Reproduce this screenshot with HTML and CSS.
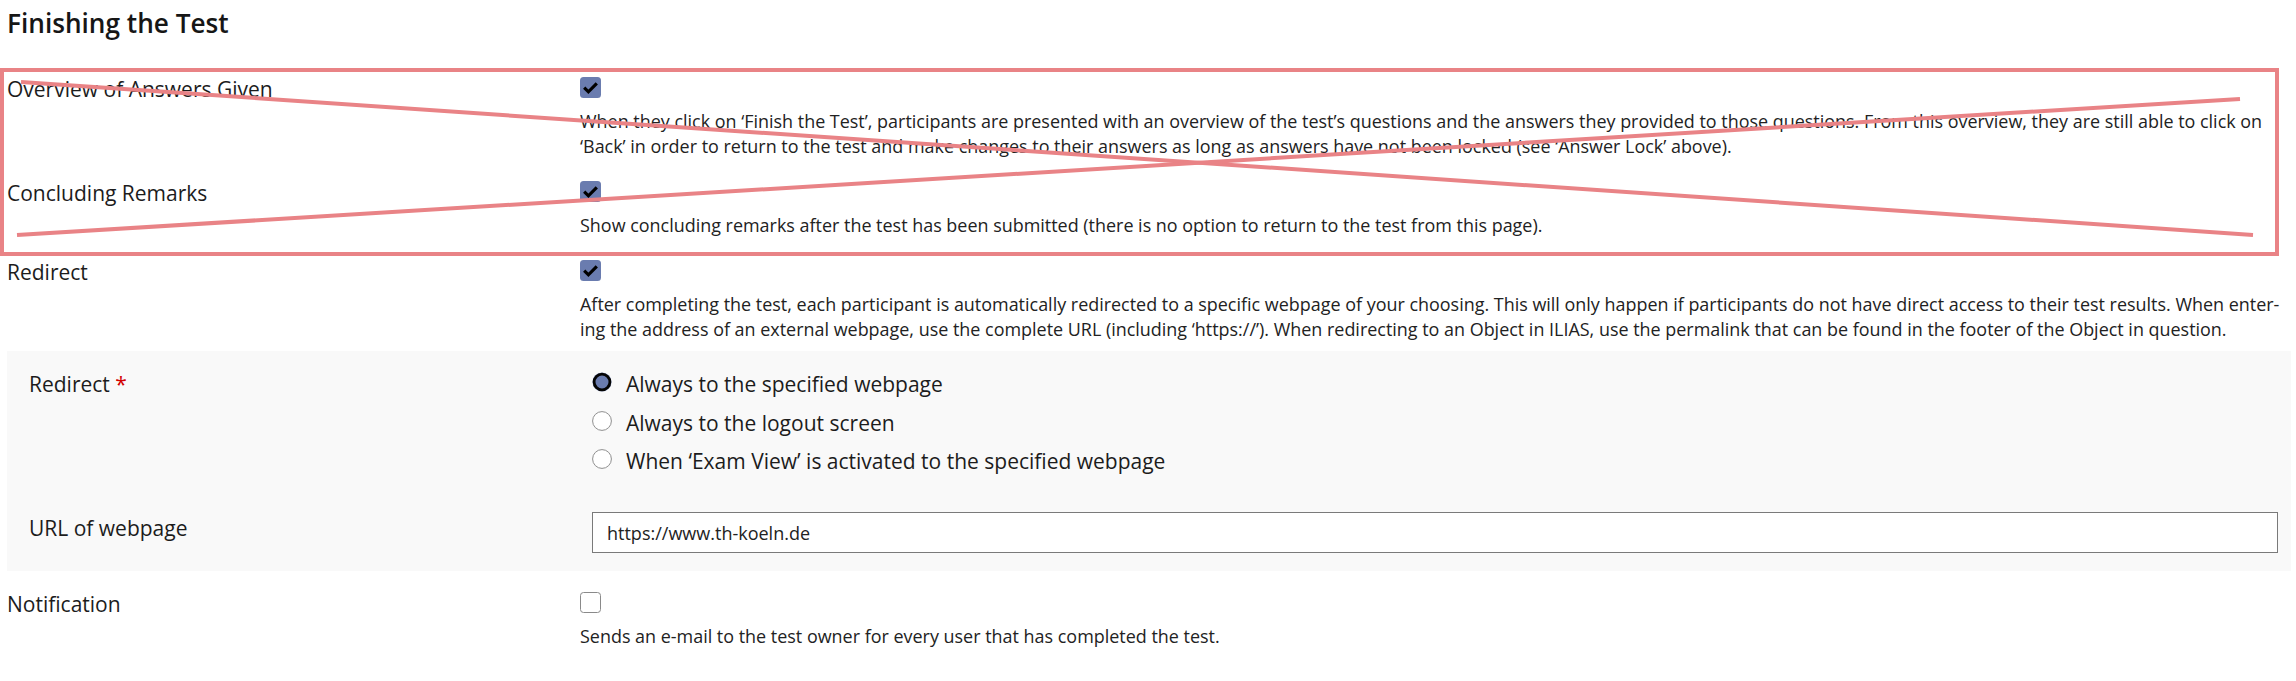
FILE: index.html
```html
<!DOCTYPE html>
<html lang="en">
<head>
<meta charset="utf-8">
<title>Finishing the Test</title>
<link rel="stylesheet" href="styles.css">
</head>
<body>
<div class="page">
  <h2 class="title">Finishing the Test</h2>

  <div class="row">
    <div class="label">Overview of Answers Given</div>
    <div class="field">
      <span class="cb checked"><svg viewBox="0 0 21 21" width="21" height="21"><polyline points="4.2,10.6 8.4,14.8 16.8,6.4" /></svg></span>
      <div class="desc">When they click on ‘Finish the Test’, participants are presented with an overview of the test’s questions and the answers they provided to those questions. From this overview, they are still able to click on<br>‘Back’ in order to return to the test and make changes to their answers as long as answers have not been locked (see ‘Answer Lock’ above).</div>
    </div>
  </div>

  <div class="row">
    <div class="label">Concluding Remarks</div>
    <div class="field">
      <span class="cb checked"><svg viewBox="0 0 21 21" width="21" height="21"><polyline points="4.2,10.6 8.4,14.8 16.8,6.4" /></svg></span>
      <div class="desc">Show concluding remarks after the test has been submitted (there is no option to return to the test from this page).</div>
    </div>
  </div>

  <div class="row row-redirect">
    <div class="label">Redirect</div>
    <div class="field">
      <span class="cb checked"><svg viewBox="0 0 21 21" width="21" height="21"><polyline points="4.2,10.6 8.4,14.8 16.8,6.4" /></svg></span>
      <div class="desc">After completing the test, each participant is automatically redirected to a specific webpage of your choosing. This will only happen if participants do not have direct access to their test results. When enter-<br>ing the address of an external webpage, use the complete URL (including ‘https://’). When redirecting to an Object in ILIAS, use the permalink that can be found in the footer of the Object in question.</div>
    </div>
  </div>

  <div class="subform">
    <div class="subrow">
      <div class="label">Redirect <span class="req">*</span></div>
      <div class="radios">
        <div class="radio-item">
          <svg class="radio" viewBox="0 0 20 20" width="20" height="20"><circle cx="10" cy="10" r="9.6" fill="#8d9bc2"/><circle cx="10" cy="10" r="7.9" fill="#6a7caf" stroke="#050505" stroke-width="2.8"/></svg>
          <span>Always to the specified webpage</span>
        </div>
        <div class="radio-item">
          <svg class="radio" viewBox="0 0 20 20" width="20" height="20"><circle cx="10" cy="10" r="9.4" fill="#fff" stroke="#8f8f8f" stroke-width="1"/></svg>
          <span>Always to the logout screen</span>
        </div>
        <div class="radio-item">
          <svg class="radio" viewBox="0 0 20 20" width="20" height="20"><circle cx="10" cy="10" r="9.4" fill="#fff" stroke="#8f8f8f" stroke-width="1"/></svg>
          <span>When ‘Exam View’ is activated to the specified webpage</span>
        </div>
      </div>
    </div>
    <div class="subrow subrow-url">
      <div class="label label-url">URL of webpage</div>
      <div class="input">https://www.th-koeln.de</div>
    </div>
  </div>

  <div class="row row-notify">
    <div class="label">Notification</div>
    <div class="field">
      <span class="cb"></span>
      <div class="desc">Sends an e-mail to the test owner for every user that has completed the test.</div>
    </div>
  </div>

  <svg class="annotation" viewBox="0 0 2280 190" width="2280" height="190">
    <rect x="2" y="2" width="2275" height="184" fill="none" stroke="#e98386" stroke-width="4"/>
    <line x1="21" y1="14" x2="2253" y2="167" stroke="#e98386" stroke-width="4"/>
    <line x1="17" y1="167" x2="2240" y2="31" stroke="#e98386" stroke-width="4"/>
  </svg>
</div>
</body>
</html>
```

FILE: styles.css
```css
html, body {
  margin: 0;
  padding: 0;
  background: #ffffff;
}

body {
  font-family: "Open Sans", "Noto Sans", "Liberation Sans", sans-serif;
  color: #1c1c1c;
}

.page {
  position: relative;
  padding: 0 5px 20px 7px;
}

.title {
  margin: 5px 0 24px;
  font-size: 26.2px;
  line-height: 36px;
  font-weight: 600;
  color: #161616;
}

.row {
  display: grid;
  grid-template-columns: 573px 1fr;
  padding: 12px 0 10px;
}

.row-redirect {
  padding-bottom: 9px;
}

.label {
  font-size: 21px;
  line-height: 24px;
  color: #1c1c1c;
}

.field {
  display: flex;
  flex-direction: column;
  align-items: flex-start;
}

.cb {
  display: block;
  width: 21px;
  height: 21px;
  box-sizing: border-box;
  border-radius: 3.5px;
  background: #ffffff;
  border: 1px solid #8a8a8a;
}

.cb.checked {
  background: #6a7caf;
  border: none;
}

.cb svg {
  display: block;
}

.cb svg polyline {
  fill: none;
  stroke: #000000;
  stroke-width: 3.2;
  stroke-linecap: butt;
  stroke-linejoin: miter;
}

.desc {
  margin-top: 11px;
  font-size: 17.95px;
  line-height: 25px;
  color: #222222;
  white-space: nowrap;
}

.subform {
  background: #f9f9f9;
  padding: 21px 13px 18px 22px;
}

.subrow {
  display: grid;
  grid-template-columns: 563px 1fr;
}

.subrow-url {
  margin-top: 39px;
}

.label-url {
  padding-top: 4px;
}

.req {
  color: #d20000;
}

.radios {
  display: flex;
  flex-direction: column;
  gap: 14.5px;
}

.radio-item {
  display: flex;
  align-items: flex-start;
  gap: 14px;
  font-size: 21px;
  line-height: 24px;
  color: #1c1c1c;
}

.radio {
  display: block;
  flex: none;
}

.input {
  height: 41px;
  box-sizing: border-box;
  border: 1px solid #7a7a7a;
  background: #ffffff;
  padding: 0 14px;
  display: flex;
  align-items: center;
  font-size: 18px;
  color: #222222;
}

.row-notify {
  margin-top: 9px;
}

.annotation {
  position: absolute;
  left: 0;
  top: 63px;
  pointer-events: none;
}
```
